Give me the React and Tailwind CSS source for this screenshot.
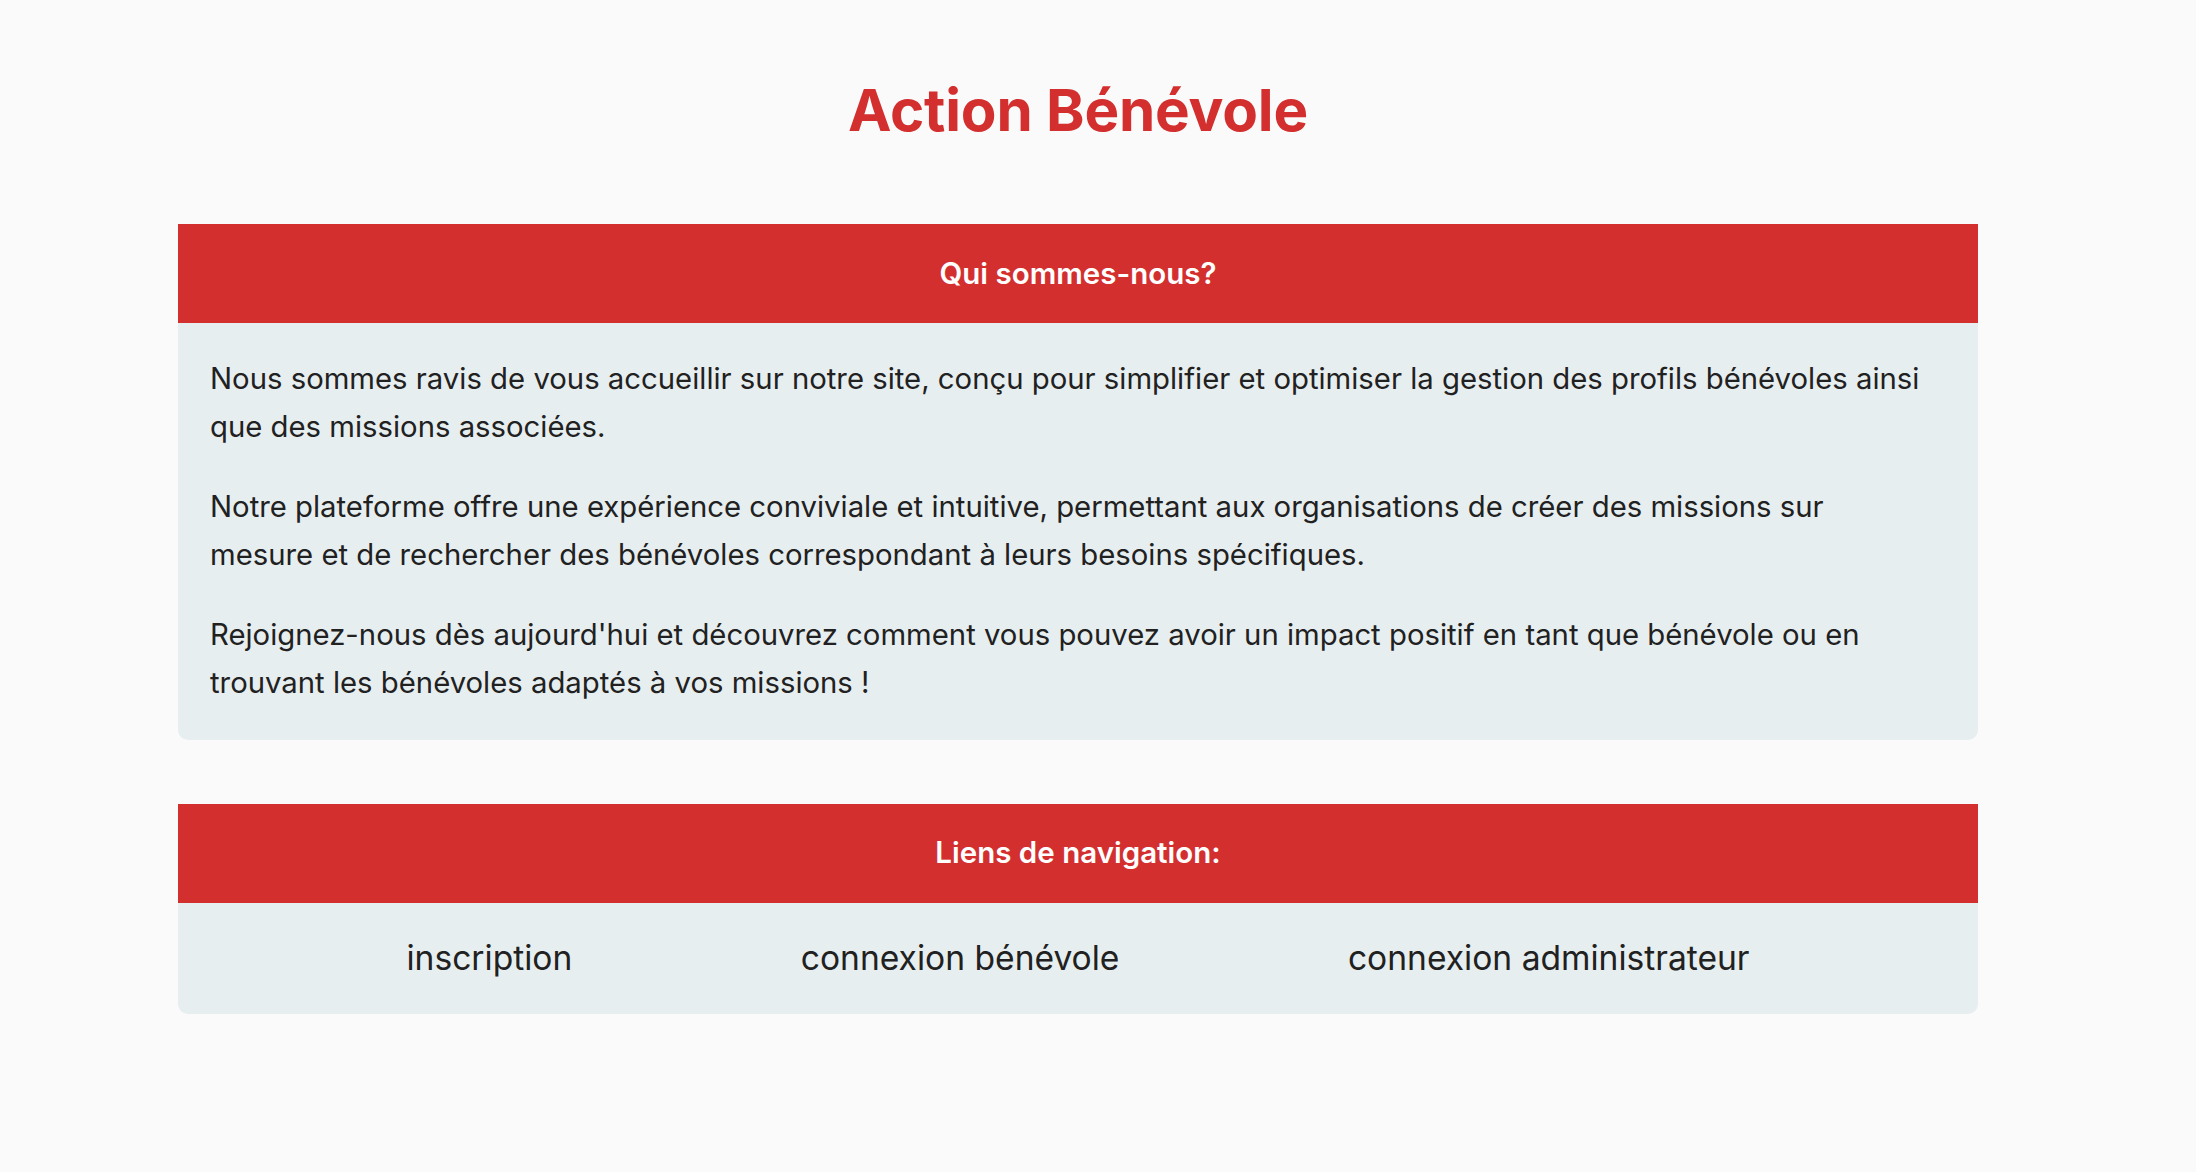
const paragraphs = [
  "Nous sommes ravis de vous accueillir sur notre site, conçu pour simplifier et optimiser la gestion des profils bénévoles ainsi que des missions associées.",
  "Notre plateforme offre une expérience conviviale et intuitive, permettant aux organisations de créer des missions sur mesure et de rechercher des bénévoles correspondant à leurs besoins spécifiques.",
  "Rejoignez-nous dès aujourd'hui et découvrez comment vous pouvez avoir un impact positif en tant que bénévole ou en trouvant les bénévoles adaptés à vos missions !",
];

const links = ["inscription", "connexion bénévole", "connexion administrateur"];

function SectionHeader({ children }) {
  return (
    <div className="h-[99px] bg-[#d32f2f] flex items-center justify-center">
      <h2 className="text-white text-[29.5px] font-semibold leading-none">{children}</h2>
    </div>
  );
}

export default function App() {
  return (
    <div
      className="min-h-screen bg-[#fafafa] pr-10 pt-[75px] text-[#212121]"
      style={{ fontFamily: "Inter, 'Open Sans', sans-serif" }}
    >
      <div className="mx-auto w-[1800px]">
        <h1 className="text-center text-[58.3px] leading-[70px] font-bold text-[#d32f2f] mb-[79px] tracking-[-0.2px]">
          Action Bénévole
        </h1>

        {/* presentation */}
        <section>
          <SectionHeader>Qui sommes-nous?</SectionHeader>
          <div className="bg-[#e7eef0] rounded-b-[10px] pt-8 pb-[33px] pl-8 pr-[50px] flex flex-col gap-[33px]">
            {paragraphs.map((p) => (
              <p key={p} className="text-[29.3px] leading-[47.6px]">
                {p}
              </p>
            ))}
          </div>
        </section>

        {/* navigation */}
        <section className="mt-16">
          <SectionHeader>Liens de navigation:</SectionHeader>
          <nav className="bg-[#e7eef0] rounded-b-[10px] h-[111px] flex items-center justify-evenly">
            {links.map((l) => (
              <a key={l} href="#" className="text-[33.6px] text-[#212121] leading-none">
                {l}
              </a>
            ))}
          </nav>
        </section>
      </div>
    </div>
  );
}
